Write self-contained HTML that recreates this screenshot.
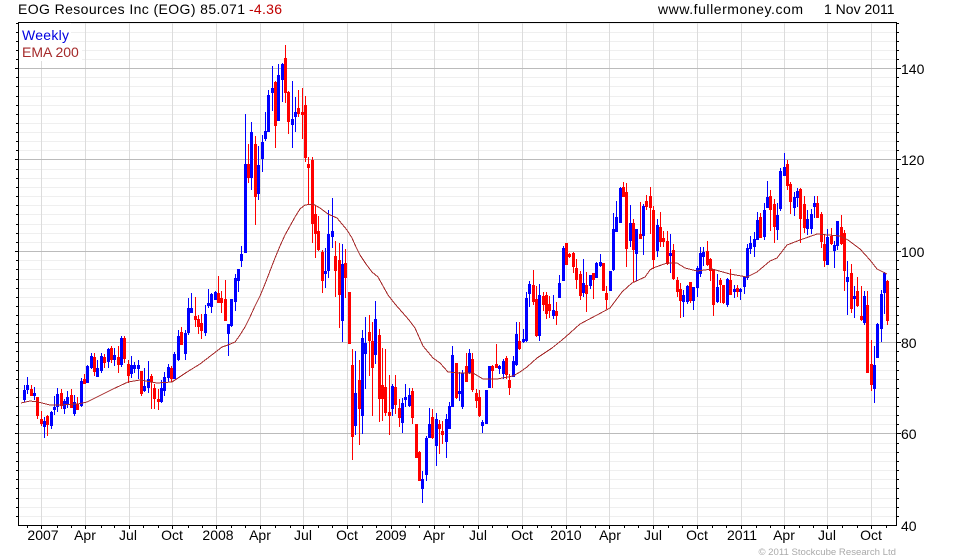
<!DOCTYPE html>
<html lang="en">
<head>
<meta charset="utf-8">
<title>EOG Resources Inc (EOG)</title>
<style>
html,body{margin:0;padding:0;background:#fff;width:980px;height:560px;overflow:hidden}
svg{display:block}
text{font-family:"Liberation Sans",Arial,sans-serif;font-size:14px;fill:#000}
</style>
</head>
<body>
<svg width="980" height="560" viewBox="0 0 980 560" xmlns="http://www.w3.org/2000/svg">
<rect width="980" height="560" fill="#fff"/>
<g shape-rendering="crispEdges" fill="none">
<path stroke="#efefef" d="M19 23.5h877M19 32.5h877M19 41.5h877M19 50.5h877M19 59.5h877M19 77.5h877M19 86.5h877M19 96.5h877M19 105.5h877M19 114.5h877M19 123.5h877M19 132.5h877M19 141.5h877M19 150.5h877M19 169.5h877M19 178.5h877M19 187.5h877M19 196.5h877M19 205.5h877M19 214.5h877M19 224.5h877M19 233.5h877M19 242.5h877M19 260.5h877M19 269.5h877M19 279.5h877M19 288.5h877M19 297.5h877M19 306.5h877M19 315.5h877M19 324.5h877M19 333.5h877M19 351.5h877M19 361.5h877M19 370.5h877M19 379.5h877M19 388.5h877M19 397.5h877M19 406.5h877M19 415.5h877M19 424.5h877M19 443.5h877M19 452.5h877M19 461.5h877M19 470.5h877M19 479.5h877M19 488.5h877M19 498.5h877M19 507.5h877M19 516.5h877"/>
<path stroke="#dcdcdc" d="M41.5 23V525M85.5 23V525M129.5 23V525M172.5 23V525M216.5 23V525M260.5 23V525M303.5 23V525M347.5 23V525M391.5 23V525M434.5 23V525M478.5 23V525M522.5 23V525M566.5 23V525M609.5 23V525M653.5 23V525M697.5 23V525M741.5 23V525M784.5 23V525M827.5 23V525M871.5 23V525"/>
<path stroke="#bbb" d="M19 68.5h877M19 159.5h877M19 251.5h877M19 342.5h877M19 433.5h877"/>
<rect x="19" y="23" width="52" height="20" fill="#fff"/>
<rect x="19" y="43" width="63" height="18" fill="#fff"/>

<path stroke="#00f" stroke-width="1" d="M24.5 385V402M27.5 377V394M34.5 387V400M44.5 417V438M51.5 411V429M54.5 396V415M57.5 388V412M64.5 399V414M67.5 391V408M74.5 395V416M81.5 378V407M87.5 365V383M91.5 353V369M97.5 360V377M101.5 353V373M108.5 348V368M114.5 348V366M121.5 336V367M131.5 356V378M134.5 362V373M138.5 360V379M144.5 368V392M148.5 361V393M161.5 380V403M164.5 372V396M168.5 364V382M174.5 352V379M178.5 330V361M185.5 330V360M188.5 298V335M191.5 293V313M205.5 305V336M208.5 289V308M211.5 293V313M215.5 291V300M228.5 324V356M231.5 299V327M235.5 274V311M238.5 269V292M241.5 246V267M245.5 114V253M251.5 122V190M258.5 146V200M262.5 135V172M265.5 112V141M268.5 90V132M272.5 66V111M278.5 64V121M282.5 63V102M292.5 81V148M295.5 97V132M325.5 248V288M328.5 210V278M332.5 198V248M342.5 244V342M355.5 351V435M362.5 330V434M365.5 317V389M375.5 301V364M392.5 384V416M402.5 398V433M405.5 384V407M409.5 388V407M422.5 471V503M426.5 436V481M429.5 408V438M436.5 413V466M446.5 414V458M449.5 402V429M452.5 346V407M459.5 372V401M462.5 370V409M469.5 349V374M482.5 420V433M486.5 390V424M489.5 366V388M499.5 365V374M503.5 359V379M513.5 356V377M516.5 322V366M523.5 329V343M526.5 292V342M529.5 281V307M539.5 284V341M553.5 295V319M559.5 275V298M563.5 246V281M583.5 259V297M590.5 275V289M596.5 262V278M600.5 254V267M610.5 271V291M613.5 213V271M616.5 201V232M620.5 187V223M630.5 205V247M636.5 229V281M643.5 204V255M657.5 219V257M670.5 234V273M683.5 290V317M687.5 285V304M693.5 287V310M697.5 266V297M700.5 247V277M703.5 247V266M717.5 274V303M727.5 278V307M734.5 285V298M740.5 288V300M744.5 277V294M747.5 244V280M750.5 236V254M754.5 232V257M757.5 212V240M764.5 203V240M767.5 181V208M777.5 203V240M780.5 168V211M784.5 153V176M794.5 192V216M797.5 188V207M807.5 210V235M811.5 209V234M814.5 196V218M827.5 229V265M834.5 241V268M837.5 221V250M847.5 261V315M854.5 286V318M864.5 291V325M874.5 346V403M877.5 323V358M881.5 290V342M884.5 272V314"/>
<path stroke="#f00" stroke-width="1" d="M31.5 385V396M37.5 397V419M41.5 411V426M47.5 415V436M61.5 389V409M71.5 389V408M77.5 397V410M84.5 374V384M94.5 353V376M104.5 354V368M111.5 346V363M118.5 346V373M124.5 336V363M128.5 360V383M141.5 371V396M151.5 374V409M154.5 384V409M158.5 389V410M171.5 366V382M181.5 327V345M195.5 297V327M198.5 315V334M201.5 314V339M218.5 276V303M221.5 291V313M225.5 280V321M248.5 144V183M255.5 136V225M275.5 81V148M285.5 45V103M288.5 91V134M298.5 90V117M302.5 88V139M305.5 96V162M308.5 157V205M312.5 157V243M315.5 206V258M318.5 216V251M322.5 250V293M335.5 241V297M339.5 243V328M345.5 249V298M349.5 292V344M352.5 349V460M359.5 360V445M369.5 315V376M372.5 322V416M379.5 329V422M382.5 348V421M385.5 349V416M389.5 375V435M395.5 375V414M399.5 399V427M412.5 388V424M416.5 424V458M419.5 451V481M432.5 409V439M439.5 420V454M442.5 421V444M456.5 363V399M466.5 353V382M472.5 353V392M476.5 389V408M479.5 390V417M492.5 365V388M496.5 344V368M506.5 356V379M509.5 374V395M519.5 322V350M533.5 270V305M536.5 286V337M543.5 292V311M546.5 292V319M549.5 296V318M556.5 302V325M566.5 243V265M569.5 253V258M573.5 252V273M576.5 259V289M580.5 271V300M586.5 272V312M593.5 273V299M603.5 263V291M606.5 286V309M623.5 182V197M626.5 183V267M633.5 219V282M640.5 202V239M646.5 195V210M650.5 187V234M653.5 206V269M660.5 212V247M663.5 231V247M667.5 231V265M673.5 244V280M677.5 277V297M680.5 283V318M690.5 282V303M707.5 241V266M710.5 258V281M713.5 269V316M720.5 278V303M723.5 285V304M730.5 269V295M737.5 285V297M760.5 213V238M770.5 190V231M774.5 199V243M787.5 160V190M790.5 182V214M800.5 188V243M804.5 196V233M817.5 196V218M821.5 212V248M824.5 234V267M831.5 228V245M841.5 215V245M844.5 230V291M851.5 264V313M857.5 277V307M861.5 286V321M867.5 291V373M871.5 340V391M887.5 280V325"/>
<path stroke="#00f" stroke-width="3" d="M24.5 390V400M27.5 385V390M34.5 393V396M44.5 421V427M51.5 412V426M54.5 407V410M57.5 394V407M64.5 401V409M67.5 397V405M74.5 402V414M81.5 381V406M87.5 366V383M91.5 356V368M97.5 368V377M101.5 356V371M108.5 349V362M114.5 355V360M121.5 338V365M131.5 365V374M134.5 365V369M138.5 365V369M144.5 386V391M148.5 379V388M161.5 388V402M164.5 377V391M168.5 367V378M174.5 354V379M178.5 336V360M185.5 333V354M188.5 308V333M191.5 308V313M205.5 314V333M208.5 303V306M211.5 294V307M215.5 292V300M228.5 324V334M231.5 299V326M235.5 278V302M238.5 269V281M241.5 254V261M245.5 164V253M251.5 132V178M258.5 165V194M262.5 142V159M265.5 131V139M268.5 95V132M272.5 88V93M278.5 75V121M282.5 64V80M292.5 119V125M295.5 112V117M325.5 271V274M328.5 234V271M332.5 231V237M342.5 264V321M355.5 393V426M362.5 338V416M365.5 343V354M375.5 319V355M392.5 386V409M402.5 403V423M405.5 397V400M409.5 395V406M422.5 479V489M426.5 438V475M429.5 424V438M436.5 419V446M446.5 419V442M449.5 406V429M452.5 355V407M459.5 391V394M462.5 373V407M469.5 353V373M482.5 422V426M486.5 390V424M489.5 366V388M499.5 366V369M503.5 361V374M513.5 361V377M516.5 334V365M523.5 339V342M526.5 298V341M529.5 284V294M539.5 295V336M553.5 310V316M559.5 283V298M563.5 248V281M583.5 283V293M590.5 275V286M596.5 263V278M600.5 262V266M610.5 271V291M613.5 229V270M616.5 217V232M620.5 188V223M630.5 223V241M636.5 229V254M643.5 206V236M657.5 225V251M670.5 253V256M683.5 295V302M687.5 286V302M693.5 287V301M697.5 268V288M700.5 253V274M703.5 252V257M717.5 287V302M727.5 279V305M734.5 289V292M740.5 289V292M744.5 277V287M747.5 248V278M750.5 243V249M754.5 239V247M757.5 220V240M764.5 210V237M767.5 197V208M777.5 215V230M780.5 171V209M784.5 167V176M794.5 197V208M797.5 191V198M807.5 219V229M811.5 214V229M814.5 203V207M827.5 237V265M834.5 245V251M837.5 221V246M847.5 277V282M854.5 296V299M864.5 296V323M874.5 365V389M877.5 324V358M881.5 294V329M884.5 273V293"/>
<path stroke="#f00" stroke-width="3" d="M31.5 389V396M37.5 397V416M41.5 419V424M47.5 416V425M61.5 393V406M71.5 395V408M77.5 404V410M84.5 379V384M94.5 357V372M104.5 357V363M111.5 348V360M118.5 357V365M124.5 338V359M128.5 364V376M141.5 371V394M151.5 376V382M154.5 388V399M158.5 399V402M171.5 368V379M181.5 332V345M195.5 316V320M198.5 319V327M201.5 323V331M218.5 293V303M221.5 298V303M225.5 299V321M248.5 164V178M255.5 144V197M275.5 82V126M285.5 58V93M288.5 92V122M298.5 108V114M302.5 112V115M305.5 105V158M308.5 164V168M312.5 160V224M315.5 214V234M318.5 231V250M322.5 252V281M335.5 256V271M339.5 260V295M345.5 263V278M349.5 292V344M352.5 365V437M359.5 380V409M369.5 332V341M372.5 341V368M379.5 335V399M382.5 385V399M385.5 387V413M389.5 412V416M395.5 387V405M399.5 408V418M412.5 391V418M416.5 424V458M419.5 452V481M432.5 417V438M439.5 424V429M442.5 431V435M456.5 363V398M466.5 366V382M472.5 359V390M476.5 393V401M479.5 397V416M492.5 366V371M496.5 364V368M506.5 358V375M509.5 380V388M519.5 341V349M533.5 285V302M536.5 299V336M543.5 296V305M546.5 295V314M549.5 304V311M556.5 311V316M566.5 243V265M569.5 254V257M573.5 253V267M576.5 268V280M580.5 274V296M586.5 285V294M593.5 273V280M603.5 263V291M606.5 293V300M623.5 187V197M626.5 192V249M633.5 223V250M640.5 234V239M646.5 201V207M650.5 196V208M653.5 210V260M660.5 227V242M663.5 238V242M667.5 241V264M673.5 250V279M677.5 280V292M680.5 289V301M690.5 282V301M707.5 251V265M710.5 259V271M713.5 269V305M720.5 280V285M723.5 285V303M730.5 280V295M737.5 288V292M760.5 217V238M770.5 196V210M774.5 204V227M787.5 164V186M790.5 184V202M800.5 189V219M804.5 204V228M817.5 203V218M821.5 214V242M824.5 244V261M831.5 236V244M841.5 227V244M844.5 233V271M851.5 273V309M857.5 291V306M861.5 316V320M867.5 305V373M871.5 364V385M887.5 281V321"/>
<polyline stroke="#a52a2a" stroke-width="1" points="21,403 30,401 38,402 50,405 60,405 78,404 87,402 97,397 113,389 128,382 140,380 157,383 172,382 187,372 200,364 213,354 222,347 228,345 235,342 240,335 245,327 250,317 255,306 260,296 265,284 270,271 275,258 280,246 285,235 290,226 295,217 300,209 305,205 313,204 320,208 328,214 337,218 342,224 347,230 352,238 356,247 360,255 366,264 372,272 378,277 383,286 388,295 395,304 402,312 409,320 415,328 419,337 423,346 428,352 433,358 440,363 448,372 460,373 473,373 483,379 497,379 513,376 520,372 527,367 537,358 552,348 562,340 570,333 580,324 597,315 610,308 616,300 622,292 632,283 645,277 650,270 653,268 667,263 677,263 685,268 697,271 712,269 730,274 747,277 757,272 770,261 777,258 787,245 800,240 817,234 840,236 848,240 860,249 870,260 877,269 887,274"/>
<path stroke="#000" d="M18.5 22.5H896.5V525.5H18.5Z"/>
<path stroke="#000" d="M16 23.5h2M16 32.5h2M16 41.5h2M16 50.5h2M16 59.5h2M15 68.5h3M16 77.5h2M16 86.5h2M16 96.5h2M16 105.5h2M16 114.5h2M16 123.5h2M16 132.5h2M16 141.5h2M16 150.5h2M15 159.5h3M16 169.5h2M16 178.5h2M16 187.5h2M16 196.5h2M16 205.5h2M16 214.5h2M16 224.5h2M16 233.5h2M16 242.5h2M15 251.5h3M16 260.5h2M16 269.5h2M16 279.5h2M16 288.5h2M16 297.5h2M16 306.5h2M16 315.5h2M16 324.5h2M16 333.5h2M15 342.5h3M16 351.5h2M16 361.5h2M16 370.5h2M16 379.5h2M16 388.5h2M16 397.5h2M16 406.5h2M16 415.5h2M16 424.5h2M15 433.5h3M16 443.5h2M16 452.5h2M16 461.5h2M16 470.5h2M16 479.5h2M16 488.5h2M16 498.5h2M16 507.5h2M16 516.5h2"/>
<path stroke="#000" d="M897 23.5h2M897 32.5h2M897 41.5h2M897 50.5h2M897 59.5h2M897 68.5h4M897 77.5h2M897 86.5h2M897 96.5h2M897 105.5h2M897 114.5h2M897 123.5h2M897 132.5h2M897 141.5h2M897 150.5h2M897 159.5h4M897 169.5h2M897 178.5h2M897 187.5h2M897 196.5h2M897 205.5h2M897 214.5h2M897 224.5h2M897 233.5h2M897 242.5h2M897 251.5h4M897 260.5h2M897 269.5h2M897 279.5h2M897 288.5h2M897 297.5h2M897 306.5h2M897 315.5h2M897 324.5h2M897 333.5h2M897 342.5h4M897 351.5h2M897 361.5h2M897 370.5h2M897 379.5h2M897 388.5h2M897 397.5h2M897 406.5h2M897 415.5h2M897 424.5h2M897 433.5h4M897 443.5h2M897 452.5h2M897 461.5h2M897 470.5h2M897 479.5h2M897 488.5h2M897 498.5h2M897 507.5h2M897 516.5h2"/>
<path stroke="#000" d="M27.5 526v2M57.5 526v2M71.5 526v2M101.5 526v2M114.5 526v2M143.5 526v2M158.5 526v2M188.5 526v2M202.5 526v2M231.5 526v2M245.5 526v2M275.5 526v2M290.5 526v2M318.5 526v2M332.5 526v2M362.5 526v2M376.5 526v2M405.5 526v2M419.5 526v2M449.5 526v2M463.5 526v2M492.5 526v2M507.5 526v2M537.5 526v2M551.5 526v2M580.5 526v2M595.5 526v2M624.5 526v2M638.5 526v2M668.5 526v2M682.5 526v2M712.5 526v2M726.5 526v2M756.5 526v2M770.5 526v2M799.5 526v2M813.5 526v2M842.5 526v2M857.5 526v2M886.5 526v2"/>
<path stroke="#000" d="M41.5 526v3M85.5 526v3M129.5 526v3M172.5 526v3M216.5 526v3M260.5 526v3M303.5 526v3M347.5 526v3M391.5 526v3M434.5 526v3M478.5 526v3M522.5 526v3M566.5 526v3M609.5 526v3M653.5 526v3M697.5 526v3M741.5 526v3M784.5 526v3M827.5 526v3M871.5 526v3"/>
</g>

<text x="18" y="14" textLength="227" lengthAdjust="spacing">EOG Resources Inc (EOG) 85.071</text>
<text x="249" y="14" textLength="33" lengthAdjust="spacing" style="fill:#c00000">-4.36</text>
<text x="658" y="14" textLength="145" lengthAdjust="spacing">www.fullermoney.com</text>
<text x="824" y="14">1 Nov 2011</text>
<text x="22" y="40" textLength="47" lengthAdjust="spacing" style="fill:#0000e0">Weekly</text>
<text x="22" y="57" style="fill:#a52a2a">EMA 200</text>

<text x="901" y="74">140</text>
<text x="901" y="165">120</text>
<text x="901" y="257">100</text>
<text x="901" y="348">80</text>
<text x="901" y="439">60</text>
<text x="901" y="531">40</text>

<g text-anchor="middle">
<text x="43" y="540">2007</text>
<text x="85" y="540">Apr</text>
<text x="128" y="540">Jul</text>
<text x="172" y="540">Oct</text>
<text x="218" y="540">2008</text>
<text x="260" y="540">Apr</text>
<text x="303" y="540">Jul</text>
<text x="347" y="540">Oct</text>
<text x="391" y="540">2009</text>
<text x="434" y="540">Apr</text>
<text x="478" y="540">Jul</text>
<text x="522" y="540">Oct</text>
<text x="566" y="540">2010</text>
<text x="610" y="540">Apr</text>
<text x="653" y="540">Jul</text>
<text x="697" y="540">Oct</text>
<text x="742" y="540">2011</text>
<text x="784" y="540">Apr</text>
<text x="827" y="540">Jul</text>
<text x="871" y="540">Oct</text>
</g>
<text x="896" y="555" text-anchor="end" style="font-size:9.6px;fill:#aaa">© 2011 Stockcube Research Ltd</text>
</svg>
</body>
</html>
